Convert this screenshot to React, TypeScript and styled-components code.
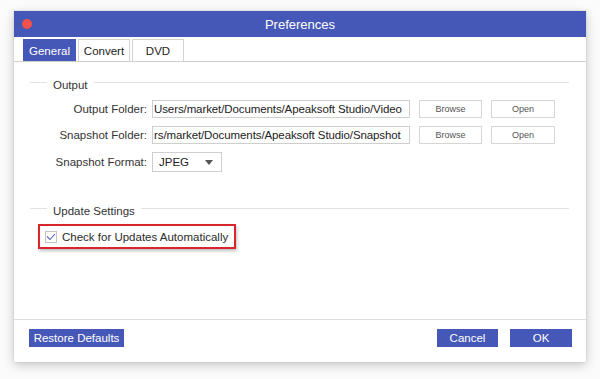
import styled, { createGlobalStyle } from 'styled-components';

const Global = createGlobalStyle`
  html, body {
    margin: 0;
    padding: 0;
    background: #ffffff;
  }
  body {
    font-family: "Liberation Sans", Arial, sans-serif;
    color: #2b2b2b;
  }
`;

const Page = styled.div`
  width: 600px;
  height: 379px;
  padding: 11px 0 0 14px;
  box-sizing: border-box;
  background: #fbfbfb;
`;

const Window = styled.div`
  width: 572px;
  height: 351px;
  display: flex;
  flex-direction: column;
  background: #ffffff;
  box-shadow: 0 3px 10px rgba(0, 0, 0, 0.22), 0 0 1px rgba(0, 0, 0, 0.25);
`;

const TitleBar = styled.div`
  position: relative;
  height: 26px;
  flex: none;
  display: flex;
  align-items: center;
  justify-content: center;
  background: #4658b7;
  color: #ffffff;
  font-size: 13px;
`;

const CloseDot = styled.span`
  position: absolute;
  left: 8px;
  top: 8px;
  width: 10px;
  height: 10px;
  border-radius: 50%;
  background: #f2524c;
`;

const TabBar = styled.div`
  height: 25px;
  flex: none;
  display: flex;
  align-items: flex-end;
  gap: 2px;
  padding-left: 9px;
  border-bottom: 1px solid #cfcfcf;
  box-sizing: border-box;
`;

const Tab = styled.div<{ $active?: boolean; $width: number }>`
  width: ${(p) => p.$width}px;
  height: 22px;
  display: flex;
  align-items: center;
  justify-content: center;
  box-sizing: border-box;
  font-size: 11.5px;
  border: 1px solid ${(p) => (p.$active ? '#4658b7' : '#d3d3d3')};
  border-bottom: none;
  background: ${(p) => (p.$active ? '#4658b7' : '#ffffff')};
  color: ${(p) => (p.$active ? '#ffffff' : '#222222')};
`;

const Content = styled.div`
  flex: 1;
  padding: 14px 17px 0 16px;
  display: flex;
  flex-direction: column;
`;

const SectionHead = styled.div`
  display: flex;
  align-items: center;
  height: 12px;
  font-size: 11.5px;
  color: #333333;
  &::before {
    content: '';
    width: 17px;
    height: 1px;
    background: #e2e2e2;
  }
  &::after {
    content: '';
    flex: 1;
    height: 1px;
    background: #e2e2e2;
  }
`;

const SectionLabel = styled.span`
  padding: 0 6px;
  position: relative;
  top: 3px;
`;

const FormGrid = styled.div`
  display: grid;
  grid-template-columns: 117px auto;
  column-gap: 5px;
  row-gap: 8px;
  margin-top: 12px;
  align-items: center;
`;

const Label = styled.div`
  text-align: right;
  font-size: 11.5px;
  color: #333333;
`;

const FieldRow = styled.div`
  display: flex;
  gap: 9px;
`;

const PathInput = styled.div`
  width: 258px;
  height: 18px;
  box-sizing: border-box;
  border: 1px solid #cfcfcf;
  padding: 0 1px;
  font-size: 11.5px;
  letter-spacing: -0.1px;
  line-height: 16px;
  white-space: nowrap;
  overflow: hidden;
  color: #222222;
`;

const SmallButton = styled.div<{ $w: number }>`
  width: ${(p) => p.$w}px;
  height: 18px;
  box-sizing: border-box;
  border: 1px solid #d6d6d6;
  display: flex;
  align-items: center;
  justify-content: center;
  font-size: 9px;
  color: #555555;
`;

const Select = styled.div`
  width: 70px;
  height: 20px;
  box-sizing: border-box;
  border: 1px solid #cfcfcf;
  display: flex;
  align-items: center;
  justify-content: space-between;
  padding: 0 8px 0 6px;
  font-size: 11.5px;
  color: #222222;
  &::after {
    content: '';
    border-left: 4px solid transparent;
    border-right: 4px solid transparent;
    border-top: 5px solid #555555;
  }
`;

const UpdateSection = styled.div`
  margin-top: 30px;
`;

const Highlight = styled.div`
  margin: 10px 0 0 8px;
  width: 198px;
  height: 25px;
  box-sizing: border-box;
  border: 2px solid #d8262c;
  box-shadow: 1px 2px 3px rgba(0, 0, 0, 0.25);
  display: flex;
  align-items: center;
  gap: 5px;
  padding-left: 5px;
  font-size: 11.5px;
  color: #2b2b2b;
`;

const CheckBox = styled.span`
  width: 12px;
  height: 12px;
  box-sizing: border-box;
  border: 1px solid #c4c4c4;
  display: flex;
  align-items: center;
  justify-content: center;
`;

const Footer = styled.div`
  height: 43px;
  flex: none;
  border-top: 1px solid #dedede;
  box-sizing: border-box;
  display: flex;
  align-items: flex-start;
  padding: 9px 14px 0 15px;
  gap: 12px;
`;

const BlueButton = styled.div<{ $w: number }>`
  width: ${(p) => p.$w}px;
  height: 18px;
  background: #4658b7;
  color: #ffffff;
  font-size: 11.5px;
  display: flex;
  align-items: center;
  justify-content: center;
  white-space: nowrap;
`;

const Spacer = styled.div`
  flex: 1;
`;

export default function App() {
  return (
    <>
      <Global />
      <Page>
        <Window>
          <TitleBar>
            <CloseDot />
            Preferences
          </TitleBar>
          <TabBar>
            <Tab $active $width={53}>General</Tab>
            <Tab $width={52}>Convert</Tab>
            <Tab $width={52}>DVD</Tab>
          </TabBar>
          <Content>
            <SectionHead>
              <SectionLabel>Output</SectionLabel>
            </SectionHead>
            <FormGrid>
              <Label>Output Folder:</Label>
              <FieldRow>
                <PathInput>Users/market/Documents/Apeaksoft Studio/Video</PathInput>
                <SmallButton $w={63}>Browse</SmallButton>
                <SmallButton $w={64}>Open</SmallButton>
              </FieldRow>
              <Label>Snapshot Folder:</Label>
              <FieldRow>
                <PathInput>rs/market/Documents/Apeaksoft Studio/Snapshot</PathInput>
                <SmallButton $w={63}>Browse</SmallButton>
                <SmallButton $w={64}>Open</SmallButton>
              </FieldRow>
              <Label>Snapshot Format:</Label>
              <FieldRow>
                <Select>JPEG</Select>
              </FieldRow>
            </FormGrid>
            <UpdateSection>
              <SectionHead>
                <SectionLabel>Update Settings</SectionLabel>
              </SectionHead>
              <Highlight>
                <CheckBox>
                  <svg width="10" height="8" viewBox="0 0 10 8">
                    <path d="M1 3.5 L4 6.5 L9 1" fill="none" stroke="#5b63c4" strokeWidth="1.1" />
                  </svg>
                </CheckBox>
                Check for Updates Automatically
              </Highlight>
            </UpdateSection>
          </Content>
          <Footer>
            <BlueButton $w={95}>Restore Defaults</BlueButton>
            <Spacer />
            <BlueButton $w={61}>Cancel</BlueButton>
            <BlueButton $w={62}>OK</BlueButton>
          </Footer>
        </Window>
      </Page>
    </>
  );
}
